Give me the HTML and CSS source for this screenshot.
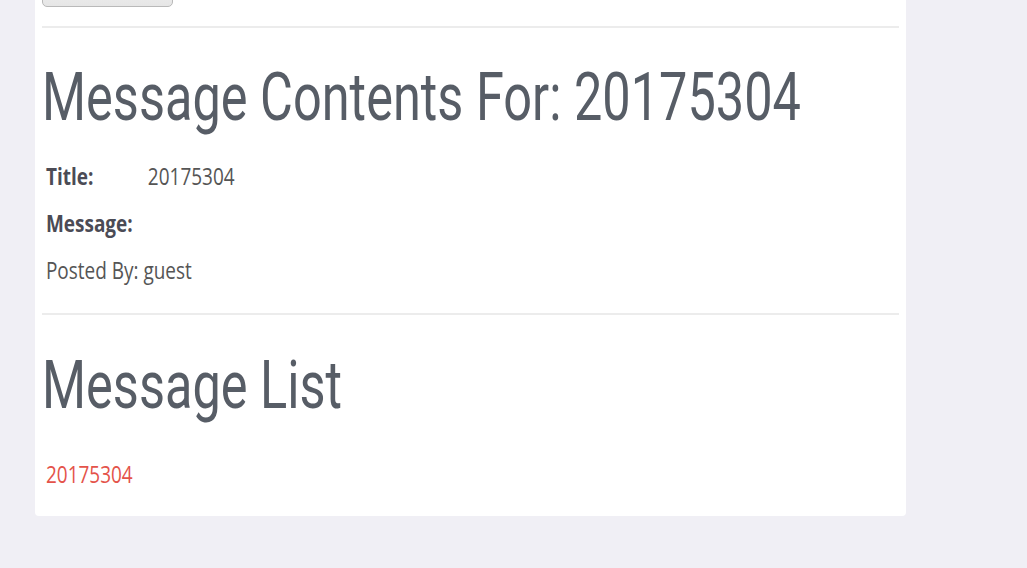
FILE: index.html
```html
<!DOCTYPE html>
<html lang="en">
<head>
    <meta charset="UTF-8">
    <meta name="viewport" content="width=device-width, initial-scale=1.0">
    <title>Message Contents</title>
    <link rel="stylesheet" href="styles.css">
</head>
<body>
    <div class="panel">
        <button type="button" class="backbtn" aria-label="Back"></button>
        <hr class="rule">
        <h1 class="heading"><span>Message Contents For: 20175304</span></h1>
        <div class="row"><span class="label">Title:</span><span>20175304</span></div>
        <div class="row"><span class="label">Message:</span></div>
        <div class="row">Posted By: guest</div>
        <hr class="rule lower">
        <h1 class="heading list"><span>Message List</span></h1>
        <div class="row"><a href="#" class="msglink">20175304</a></div>
    </div>
</body>
</html>
```

FILE: styles.css
```css
body {
    margin: 0;
    background-color: #f0eff5;
    font-family: "Open Sans", "DejaVu Sans", sans-serif;
    color: #555;
}
.panel {
    width: 857px;
    margin: -30px 0 0 35px;
    padding: 0 7px 19px 7px;
    background-color: #fff;
    border-radius: 0 0 4px 4px;
}
.backbtn {
    display: block;
    width: 131px;
    height: 37px;
    border: 1px solid #b9b9b9;
    border-radius: 5px;
    background: linear-gradient(#f4f4f4, #e6e6e6);
}
.rule {
    margin: 19px 0 0 0;
    border: 0;
    border-top: 2px solid #ececec;
}
.rule.lower {
    margin-top: 20px;
}
.heading {
    margin: 34px 0 18px 0;
    font-family: Roboto, "Liberation Sans", sans-serif;
    font-weight: 400;
    font-size: 66px;
    line-height: 72px;
    color: #575d66;
    white-space: nowrap;
}
.heading span {
    display: inline-block;
    transform: scaleX(0.765);
    transform-origin: left center;
}
.heading.list {
    margin: 35px 0 28px 0;
}
.row {
    padding-left: 5px;
    font-size: 24px;
    line-height: 47px;
    color: #555;
    white-space: nowrap;
    transform: scaleX(0.79);
    transform-origin: left center;
}
.label {
    display: inline-block;
    width: 129px;
    font-weight: 700;
    color: #4b4b55;
}
.msglink {
    color: #e4534a;
    text-decoration: none;
}
```
